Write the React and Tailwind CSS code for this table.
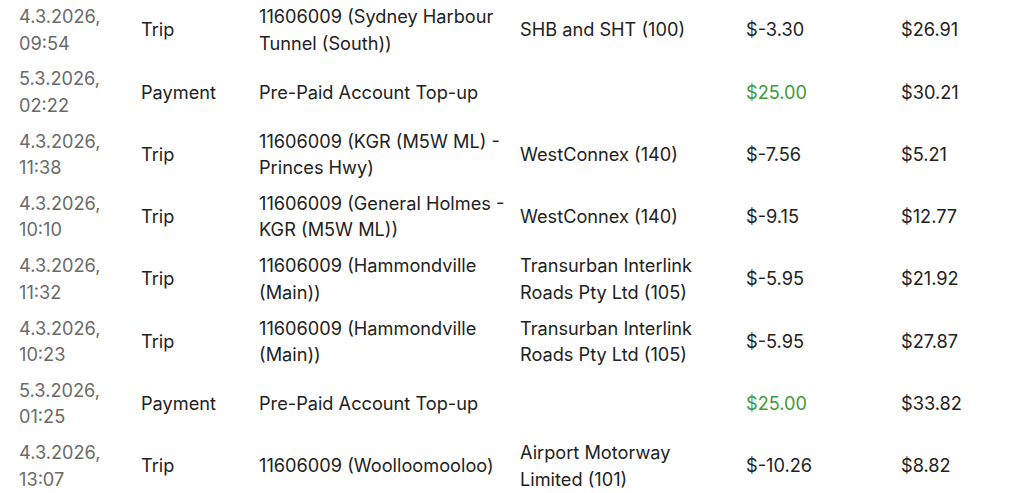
const rows = [
  { date: "4.3.2026,", time: "09:54", type: "Trip", desc: "11606009 (Sydney Harbour Tunnel (South))", op: "SHB and SHT (100)", amount: "$-3.30", balance: "$26.91" },
  { date: "5.3.2026,", time: "02:22", type: "Payment", desc: "Pre-Paid Account Top-up", op: "", amount: "$25.00", balance: "$30.21", credit: true },
  { date: "4.3.2026,", time: "11:38", type: "Trip", desc: "11606009 (KGR (M5W ML) - Princes Hwy)", op: "WestConnex (140)", amount: "$-7.56", balance: "$5.21" },
  { date: "4.3.2026,", time: "10:10", type: "Trip", desc: "11606009 (General Holmes - KGR (M5W ML))", op: "WestConnex (140)", amount: "$-9.15", balance: "$12.77" },
  { date: "4.3.2026,", time: "11:32", type: "Trip", desc: "11606009 (Hammondville (Main))", op: "Transurban Interlink Roads Pty Ltd (105)", amount: "$-5.95", balance: "$21.92" },
  { date: "4.3.2026,", time: "10:23", type: "Trip", desc: "11606009 (Hammondville (Main))", op: "Transurban Interlink Roads Pty Ltd (105)", amount: "$-5.95", balance: "$27.87" },
  { date: "5.3.2026,", time: "01:25", type: "Payment", desc: "Pre-Paid Account Top-up", op: "", amount: "$25.00", balance: "$33.82", credit: true },
  { date: "4.3.2026,", time: "13:07", type: "Trip", desc: "11606009 (Woolloomooloo)", op: "Airport Motorway Limited (101)", amount: "$-10.26", balance: "$8.82" },
];

export default function App() {
  return (
    <div className="w-[1024px] h-[493px] overflow-hidden bg-white font-['Inter',sans-serif] text-[18.2px] leading-[26.5px] text-[#222222]">
      <div className="-mt-[1.6px]">
        {rows.map((r, i) => (
          <div
            key={i}
            className="grid grid-cols-[122px_118px_261px_226px_155px_1fr] items-center h-[62.3px] pl-[19px]"
          >
            <div className="text-[#6a6a6a]">
              {r.date}
              <br />
              {r.time}
            </div>
            <div>{r.type}</div>
            <div className="pr-[10px]">{r.desc}</div>
            <div className="pr-[20px]">{r.op}</div>
            <div className={r.credit ? "text-[#3f9a3a]" : ""}>{r.amount}</div>
            <div>{r.balance}</div>
          </div>
        ))}
      </div>
    </div>
  );
}
